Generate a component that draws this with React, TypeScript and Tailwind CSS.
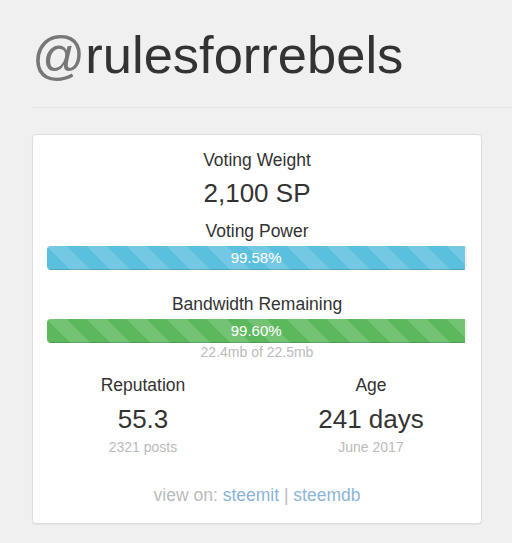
type Bar = {
  label: string;
  percent: number;
  color: string;
  note?: string;
};

const stripes =
  "bg-[linear-gradient(45deg,rgba(255,255,255,.15)_25%,transparent_25%,transparent_50%,rgba(255,255,255,.15)_50%,rgba(255,255,255,.15)_75%,transparent_75%,transparent)] bg-[length:40px_40px]";

function ProgressBar({ percent, color }: { percent: number; color: string }) {
  return (
    <div className="h-[24px] w-full overflow-hidden rounded-[4px] bg-[#f5f5f5] shadow-[inset_0_1px_2px_rgba(0,0,0,0.1)]">
      <div
        className={`${color} ${stripes} flex h-full items-center justify-center text-[15px] leading-[24px] text-white shadow-[inset_0_-1px_0_rgba(0,0,0,0.15)]`}
        style={{ width: `${percent}%` }}
      >
        {percent.toFixed(2)}%
      </div>
    </div>
  );
}

function Stat({ label, value, sub }: { label: string; value: string; sub: string }) {
  return (
    <div className="flex flex-col items-center">
      <p className="text-[17.5px] leading-[1.1] text-[#333]">{label}</p>
      <p className="mt-[10px] text-[26px] leading-[1.1] text-[#333]">{value}</p>
      <p className="mt-[6px] text-[14px] leading-[1.1] text-[#bbb]">{sub}</p>
    </div>
  );
}

export default function App() {
  const bars: Bar[] = [
    { label: 'Voting Power', percent: 99.58, color: 'bg-[#5bc0de]' },
    { label: 'Bandwidth Remaining', percent: 99.6, color: 'bg-[#5cb85c]', note: '22.4mb of 22.5mb' },
  ];

  return (
    <div className="min-h-[543px] bg-[#f0f0f0] pl-[32px] font-['Liberation_Sans',Arial,sans-serif]">
      <div className="border-b border-[#e6e6e6] pb-[24px] pt-[26px]">
        <h1 className="text-[52.5px] leading-[57px] text-[#333]">
          <span className="text-[#777]">@</span>rulesforrebels
        </h1>
      </div>

      <div className="mt-[26px] w-[450px] rounded-[4px] border border-[#ddd] bg-white px-[14px] pb-[18px] pt-[16px] text-center shadow-[0_1px_1px_rgba(0,0,0,0.05)]">
        <p className="text-[17.5px] leading-[1.1] text-[#333]">Voting Weight</p>
        <p className="mt-[9px] text-[26px] leading-[1.1] text-[#333]">2,100 SP</p>

        {bars.map((bar, index) => (
          <div key={bar.label} className={index === 0 ? 'mt-[14px]' : 'mt-[25px]'}>
            <p className="mb-[5px] text-[17.5px] leading-[1.1] text-[#333]">{bar.label}</p>
            <ProgressBar percent={bar.percent} color={bar.color} />
            {bar.note ? <p className="mt-[2px] text-[14px] leading-[1.1] text-[#bbb]">{bar.note}</p> : null}
          </div>
        ))}

        <div className="-mx-[18px] mt-[15px] grid grid-cols-2">
          <Stat label="Reputation" value="55.3" sub="2321 posts" />
          <Stat label="Age" value="241 days" sub="June 2017" />
        </div>

        <p className="mt-[31px] text-[17.5px] leading-[1.1] text-[#bbb]">
          view on: <a className="text-[#8cb4da]">steemit</a> | <a className="text-[#8cb4da]">steemdb</a>
        </p>
      </div>
    </div>
  );
}
